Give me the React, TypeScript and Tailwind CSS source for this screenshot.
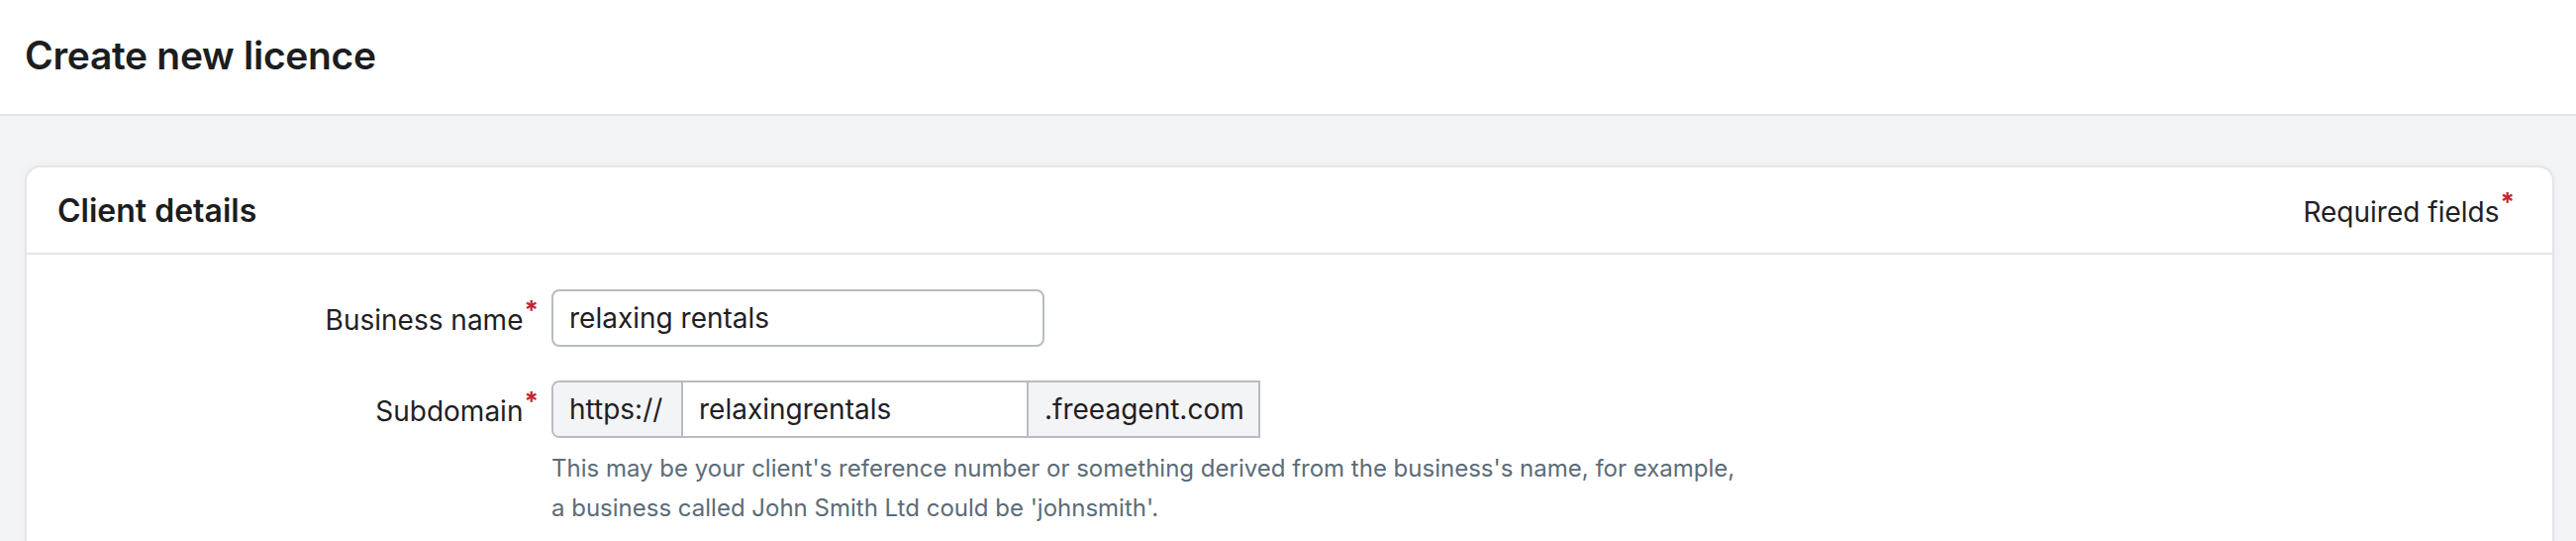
import React from "react";

const font = { fontFamily: "Inter, 'Noto Sans', sans-serif" };

function Req() {
  return (
    <span className="ml-[1px] inline-block align-top text-[26px] font-bold leading-[26px] text-[#c4262e] -mt-[9px]">
      *
    </span>
  );
}

function Field({ label, children }: { label: string; children: React.ReactNode }) {
  return (
    <div className="flex items-start">
      <div className="flex h-[58px] w-[530px] shrink-0 items-center justify-end pr-[13px] pt-[3px]">
        <span className="text-[28px] leading-none text-[#1f2023]">
          {label}
          <Req />
        </span>
      </div>
      <div className="flex flex-col">{children}</div>
    </div>
  );
}

export default function App() {
  return (
    <div className="min-h-[546px] bg-[#f3f4f6]" style={font}>
      {/* Page header */}
      <div className="flex h-[117px] items-center border-b-2 border-[#e3e4e8] bg-white pl-[25px] pb-[4px]">
        <h1 className="text-[39px] font-semibold leading-none tracking-[-0.3px] text-[#1c1d20]">
          Create new licence
        </h1>
      </div>

      {/* Body */}
      <div className="pl-[25px] pr-[22px] pt-[50px]">
        <div className="rounded-t-[16px] border-2 border-b-0 border-[#e4e5ea] bg-white pb-[40px] shadow-[0_0_10px_rgba(0,0,0,0.04)]">
          <div className="flex h-[88px] items-center justify-between border-b-2 border-[#e4e5ea] pl-[31px] pr-[38px]">
            <h2 className="mt-[2px] text-[32px] font-semibold leading-none text-[#1c1d20]">Client details</h2>
            <span className="mt-[3px] text-[28px] leading-none text-[#1f2023]">
              Required fields
              <Req />
            </span>
          </div>

          <div className="flex flex-col gap-[34px] pt-[35px]">
            <Field label="Business name">
              <div className="flex h-[58px] w-[498px] items-center rounded-[8px] border-2 border-[#b8bcc2] px-[16px] text-[28px] text-[#1f2023]">
                relaxing rentals
              </div>
            </Field>

            <Field label="Subdomain">
              <div className="flex h-[58px] w-[716px] rounded-l-[8px] border-2 border-[#b8bcc2] text-[28px] text-[#1f2023]">
                <div className="flex w-[131px] items-center rounded-l-[6px] border-r-2 border-[#b8bcc2] bg-[#f3f4f6] px-[16px]">
                  https://
                </div>
                <div className="flex flex-1 items-center px-[16px]">relaxingrentals</div>
                <div className="flex w-[234px] items-center border-l-2 border-[#b8bcc2] bg-[#f3f4f6] px-[16px]">
                  .freeagent.com
                </div>
              </div>
              <p className="mt-[11px] w-[1220px] text-[24px] leading-[40px] text-[#5c6b77]">
                This may be your client's reference number or something derived from the business's name, for example,
                <br />
                a business called John Smith Ltd could be 'johnsmith'.
              </p>
            </Field>
          </div>
        </div>
      </div>
    </div>
  );
}
